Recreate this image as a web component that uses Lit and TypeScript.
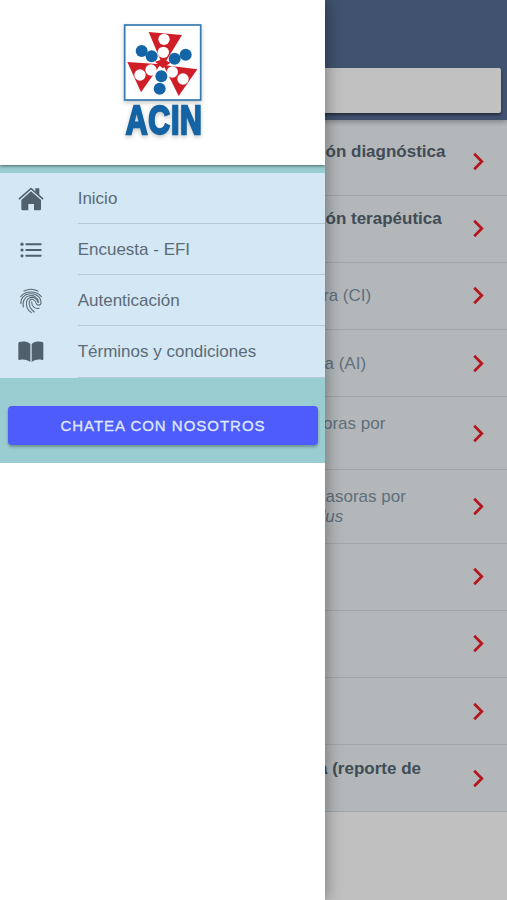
import { LitElement, html, css, svg } from "lit";
import { customElement } from "lit/decorators.js";
import { styleMap } from "lit/directives/style-map.js";

interface Topic {
  lines: unknown[];
  start: number;
  height: number;
  bold?: boolean;
}

const topics: Topic[] = [
  { lines: ["ón diagnóstica", "\u00a0"], start: 325.5, height: 67.5, bold: true },
  { lines: ["ón terapéutica", "\u00a0"], start: 325.5, height: 67.2, bold: true },
  { lines: ["ra (CI)"], start: 323, height: 67.1 },
  { lines: ["a (AI)"], start: 324.5, height: 67.1 },
  { lines: ["oras por", "\u00a0"], start: 323, height: 73.4 },
  { lines: ["asoras por", html`<i class="species">lus</i>`], start: 325.5, height: 73.2 },
  { lines: [], start: 325, height: 67.1 },
  { lines: [], start: 325, height: 67.2 },
  { lines: [], start: 325, height: 67.2 },
  { lines: ["a (reporte de", "\u00a0"], start: 318, height: 67.2, bold: true },
];

const home = svg`<svg viewBox="53 92 78 78">
  <path d="M92 108 L122 134 V161 Q122 165 118 165 H101 V146 H84 V165 H67 Q63 165 63 161 V134 Z" fill="#51616c"/>
  <path d="M57.500 130 L92 99.500 L126.500 130" fill="none" stroke="#51616c" stroke-width="5" stroke-linecap="round" stroke-linejoin="round"/>
  <path d="M105 99 H117 V120 L105 109 Z" fill="#51616c"/></svg>`;

const list = svg`<svg viewBox="53 246.500 78 78">
  <g stroke="#51616c" stroke-width="6" stroke-linecap="round">
  <path d="M78 268 H121 M78 285.500 H121 M78 303 H121"/></g>
  <g fill="#51616c"><circle cx="65" cy="268" r="4.800"/><circle cx="65" cy="285.500" r="4.800"/><circle cx="65" cy="303" r="4.800"/></g></svg>`;

const finger = svg`<svg viewBox="53 54 78 78">
  <g fill="none" stroke="#586873" stroke-width="3.200" stroke-linecap="round">
  <path d="M71 63 Q92 52 113 63"/>
  <path d="M61 80 C75 61 109 61 123 80"/>
  <path d="M62 101 C57 64 121 60 122 98 C122 107 109 108 107 99 C105 88 91 83 87 94 C84 107 93 119 102 126"/>
  <path d="M69 111 C61 71 111 66 115 97"/>
  <path d="M93 128 C75 116 74 91 87 84 C98 79 110 85 113 97"/>
  <path d="M94 95 C94 110 103 117 116 115"/>
  </g></svg>`;

const book = svg`<svg viewBox="53 206 78 78"><g fill="#51616c">
  <path d="M90 221 C80 212 66 213 57 215 Q54 216 54 219 V266 Q54 270 58 269 C70 266 82 269 90 275 Z"/>
  <path d="M94 221 C104 212 118 213 126 215 Q129 216 129 219 V266 Q129 270 125 269 C113 266 101 269 94 275 Z"/></g></svg>`;

const menu = [
  { icon: home, label: "Inicio" },
  { icon: list, label: "Encuesta - EFI" },
  { icon: finger, label: "Autenticación" },
  { icon: book, label: "Términos y condiciones" },
];

@customElement("app-root")
export class AppRoot extends LitElement {
  static styles = css`
    :host {
      display: block;
      position: relative;
      height: 900px;
      overflow: hidden;
      background: #c0c0c0;
      font-family: "Liberation Sans", Arial, sans-serif;
      font-size: 17px;
    }
    * { box-sizing: border-box; }
    .bar {
      height: 119.500px;
      padding: 68px 6px 0;
      background: #40526f;
      box-shadow: 0 2px 6px rgba(0, 0, 0, 0.3);
      position: relative;
    }
    .search {
      height: 44.500px;
      background: #c1c1c1;
      border-radius: 2px;
      box-shadow: 0 2px 3px rgba(0, 0, 0, 0.45);
    }
    .topics { padding-top: 8.700px; background: #b6babc; }
    .topic {
      display: flex;
      align-items: center;
      border-bottom: 1px solid #a1a5a8;
      background: #b3b7ba;
      color: #5f6f7c;
      white-space: nowrap;
    }
    .bold { font-weight: bold; color: #414c56; }
    .text { flex: 1; padding-top: 1px; line-height: 20px; }
    .species { margin-left: -4px; }
    .chevron { width: 12px; height: 19px; margin-right: 22.600px; flex: none; }
    .drawer {
      position: absolute;
      left: 0;
      top: 0;
      width: 325px;
      height: 900px;
      overflow: hidden;
      background: #fff;
      box-shadow: 0 0 16px rgba(0, 0, 0, 0.42);
    }
    .brand {
      height: 164.500px;
      padding: 10px 0 0 110px;
      position: relative;
      background: #fff;
      box-shadow: 0 1px 3px rgba(0, 0, 0, 0.5);
    }
    .logo {
      display: block;
      width: 105px;
      height: 140px;
      filter: drop-shadow(0 2px 2px rgba(0, 0, 0, 0.22));
    }
    .panel { height: 298px; padding-top: 8.500px; background: #9acdd1; }
    .item {
      display: flex;
      height: 51.150px;
      padding-left: 17.670px;
      background: #d3e7f4;
      color: #5b6b77;
      align-items: center;
    }
    .icon { width: 26px; height: 26px; flex: none; }
    .icon svg { display: block; width: 26px; height: 26px; }
    .label {
      flex: 1;
      height: 100%;
      margin-left: 34px;
      line-height: 52px;
      border-bottom: 1px solid #b5c8d5;
      white-space: nowrap;
    }
    .chat {
      display: block;
      width: 310px;
      height: 39px;
      margin: 28.500px 0 0 8px;
      padding: 0;
      border: 0;
      border-radius: 4px;
      background: #4d5cfb;
      color: #dfe6ff;
      font: 500 15px "Liberation Sans", Arial, sans-serif;
      letter-spacing: 0.980px;
      -webkit-text-stroke: 0.350px #dfe6ff;
      box-shadow: 0 2px 3px rgba(0, 0, 0, 0.3);
    }
  `;

  renderLogo() {
    return html`<svg class="logo" viewBox="0 0 315 420">
      <rect x="44" y="45" width="228" height="225" fill="#fff" stroke="#3479b0" stroke-width="5" />
      <g fill="#d01e29">
        <path d="M116 66 L216 75 L159 168 Z" />
        <path d="M52 156 L152 163 L93 247 Z" />
        <path d="M160 165 L262 178 L206 258 Z" />
        <path d="M135 155 L158 148 L182 158 L158 175 Z" />
      </g>
      <g fill="#1464a8">
        <circle cx="95" cy="123" r="18" /><circle cx="125" cy="139" r="18" />
        <circle cx="227" cy="134" r="18" /><circle cx="194" cy="146" r="18" />
        <circle cx="154" cy="199" r="18" /><circle cx="149" cy="236" r="18" />
      </g>
      <g fill="#fff">
        <circle cx="162" cy="88" r="17" /><circle cx="160" cy="127" r="17" />
        <circle cx="90" cy="195" r="17" /><circle cx="123" cy="180" r="17" />
        <circle cx="187" cy="186" r="17" /><circle cx="219" cy="207" r="17" />
      </g>
      <text transform="translate(47 371) scale(0.745 1)" font-size="122" font-weight="bold"
        font-family="Liberation Sans, Arial, sans-serif" letter-spacing="3"
        fill="#1464a5" stroke="#1464a5" stroke-width="7">ACIN</text>
    </svg>`;
  }

  render() {
    return html`
      <div class="bar"><div class="search"></div></div>
      <div class="topics">
        ${topics.map(
          (t) => html`<div
            class="topic ${t.bold ? "bold" : ""}"
            style=${styleMap({ height: `${t.height}px`, paddingLeft: `${t.start}px` })}
          >
            <div class="text">${t.lines.map((l) => html`<div>${l}</div>`)}</div>
            <svg class="chevron" viewBox="0 0 12 19">
              <path d="M2.200 1.800 L9.800 9.500 L2.200 17.200" fill="none" stroke="#b3161d" stroke-width="2.700" />
            </svg>
          </div>`
        )}
      </div>
      <div class="drawer">
        <div class="brand">${this.renderLogo()}</div>
        <div class="panel">
          ${menu.map(
            (m) => html`<div class="item">
              <div class="icon">${m.icon}</div>
              <div class="label">${m.label}</div>
            </div>`
          )}
          <button class="chat">CHATEA CON NOSOTROS</button>
        </div>
      </div>
    `;
  }
}
